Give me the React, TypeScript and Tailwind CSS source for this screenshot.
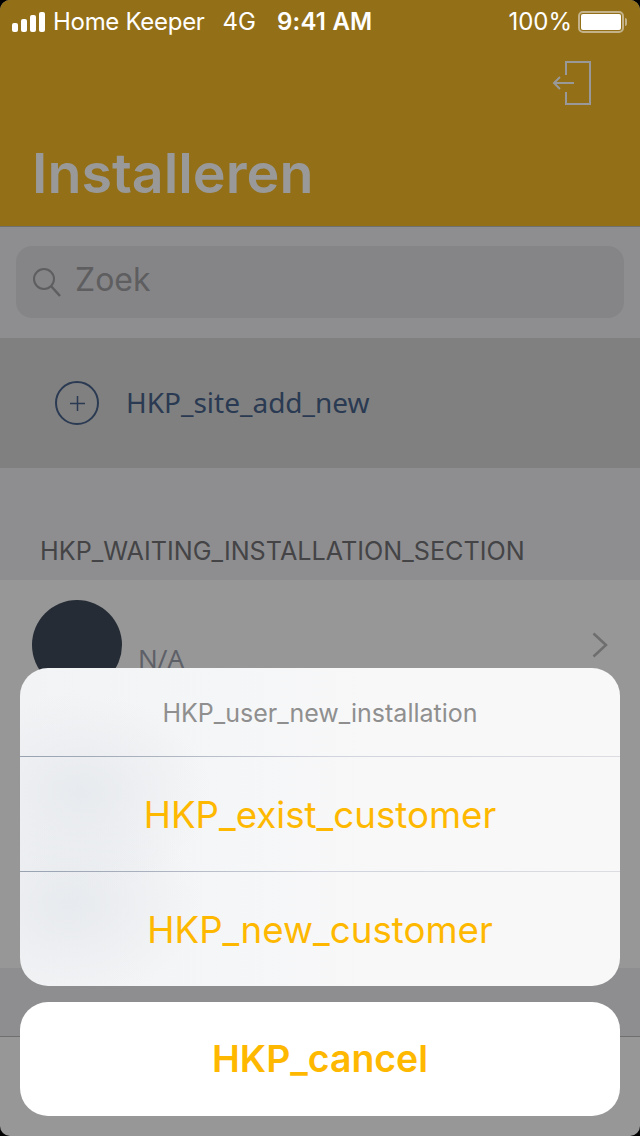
function SignalBars() {
  const heights = ["h-[9px]", "h-[13px]", "h-[17px]", "h-[20px]"];
  return (
    <div className="flex items-end gap-[3px]">
      {heights.map((h) => (
        <div key={h} className={`w-[6px] rounded-[2px] bg-white ${h}`} />
      ))}
    </div>
  );
}

function Battery() {
  return (
    <div className="flex items-center gap-[1px]">
      <div className="flex h-[22px] w-[46px] items-center rounded-[5px] border-2 border-[#c4b28a] p-[1px]">
        <div className="h-full w-full rounded-[2px] bg-white" />
      </div>
      <div className="h-[8px] w-[2px] rounded-r-sm bg-[#c4b28a]" />
    </div>
  );
}

function ExitIcon() {
  return (
    <svg width="40" height="44" viewBox="0 0 40 44" fill="none" stroke="#999999" strokeWidth="2">
      <path d="M14 14V1h24v42H14V31" />
      <path d="M22 22H2M8 16l-6 6 6 6" />
    </svg>
  );
}

function SearchIcon() {
  return (
    <svg width="30" height="30" viewBox="0 0 30 30" fill="none" stroke="#5e5e60" strokeWidth="2">
      <circle cx="12" cy="12" r="10" />
      <path d="M19 19l9 10" strokeWidth="2.5" />
    </svg>
  );
}

function Chevron() {
  return (
    <svg width="16" height="26" viewBox="0 0 16 26" fill="none" stroke="#6e6e6e" strokeWidth="2.5">
      <path d="M1.5 1.5L14 13 1.5 24.5" />
    </svg>
  );
}

function SheetRow({ label }: { label: string }) {
  return (
    <div>
      <div className="h-px bg-[linear-gradient(90deg,#98a2b0_0%,#a9b0be_20%,#d0d3dd_50%,#dcdde2_100%)]" />
      <div className="flex h-[114px] items-center justify-center pt-[2px] text-[36.7px] text-[#ffb800]">{label}</div>
    </div>
  );
}

export default function App() {
  return (
    <div className="relative h-[1136px] w-[640px] overflow-hidden bg-black font-['Inter',sans-serif]">
      <div className="flex h-full flex-col overflow-hidden rounded-[10px] bg-[#979797]">
        <header className="h-[227px] border-b border-[#6f6f6f] bg-[#937017]">
          <div className="flex h-[42px] items-center justify-between pl-[12px] pr-[13px] pt-[2px] text-[24px] text-white">
            <div className="flex items-center">
              <SignalBars />
              <span className="ml-[8px] tracking-[-0.3px]">Home Keeper</span>
              <span className="ml-[18px]">4G</span>
              <span className="ml-[21px] font-semibold tracking-[0.2px]">9:41 AM</span>
            </div>
            <div className="flex items-center gap-[6px]">
              <span>100%</span>
              <Battery />
            </div>
          </div>
          <div className="flex justify-end pr-[48px] pt-[19px]">
            <ExitIcon />
          </div>
          <h1 className="pl-[32px] pt-[36px] text-[55.6px] font-semibold leading-[64px] text-[#999999]">Installeren</h1>
        </header>

        <div className="flex h-[111px] items-center bg-[#8e8e90] px-[16px] pb-[2px]">
          <div className="flex h-[72px] w-full items-center rounded-[16px] bg-[#858587] pl-[16px]">
            <SearchIcon />
            <span className="ml-[13px] pb-[4px] text-[32px] text-[#5e5e60]">Zoek</span>
          </div>
        </div>

        <div className="flex h-[130px] items-center bg-[#808080] pl-[55px]">
          <div className="flex h-[44px] w-[44px] items-center justify-center rounded-full border-2 border-[#2a3a52]">
            <svg width="15" height="15" viewBox="0 0 15 15" fill="none" stroke="#2a3a52" strokeWidth="1.5">
              <path d="M7.5 0v15M0 7.5h15" />
            </svg>
          </div>
          <span className="ml-[27px] pb-[2px] font-['Noto_Sans',sans-serif] text-[28px] text-[#2a3a52]">
            HKP_site_add_new
          </span>
        </div>

        <div className="flex h-[112px] items-end bg-[#8e8e90] pb-[9px] pl-[40px] text-[25.2px] text-[#444446]">
          HKP_WAITING_INSTALLATION_SECTION
        </div>

        <div className="flex h-[388px] items-start bg-[#979797] pl-[32px] pr-[32px] pt-[20px]">
          <div className="h-[90px] w-[90px] rounded-full bg-[#252c35]" />
          <span className="ml-[16px] mt-[39px] font-['Noto_Sans',sans-serif] text-[26px] text-[#5e6068]">N/A</span>
          <div className="ml-auto mt-[32px]">
            <Chevron />
          </div>
        </div>

        <div className="h-[69px] border-b border-[#6f6f6f] bg-[#8e8e90]" />
      </div>

      <div className="absolute inset-x-[20px] bottom-[20px] flex flex-col gap-[16px]">
        <div className="overflow-hidden rounded-[28px] bg-[radial-gradient(ellipse_130px_100px_at_60px_125px,#e7eaee,transparent),radial-gradient(ellipse_130px_100px_at_50px_235px,#e7eaee,transparent),linear-gradient(90deg,#f2f3f5_0%,#f5f6f7_35%,#f8f8f9_60%)]">
          <div className="flex h-[88px] items-center justify-center pt-[3px] text-[25px] text-[#8f8f8f]">
            HKP_user_new_installation
          </div>
          <SheetRow label="HKP_exist_customer" />
          <SheetRow label="HKP_new_customer" />
        </div>
        <div className="flex h-[114px] items-center justify-center rounded-[28px] bg-white text-[37.4px] font-semibold text-[#ffb800]">
          HKP_cancel
        </div>
      </div>
    </div>
  );
}
